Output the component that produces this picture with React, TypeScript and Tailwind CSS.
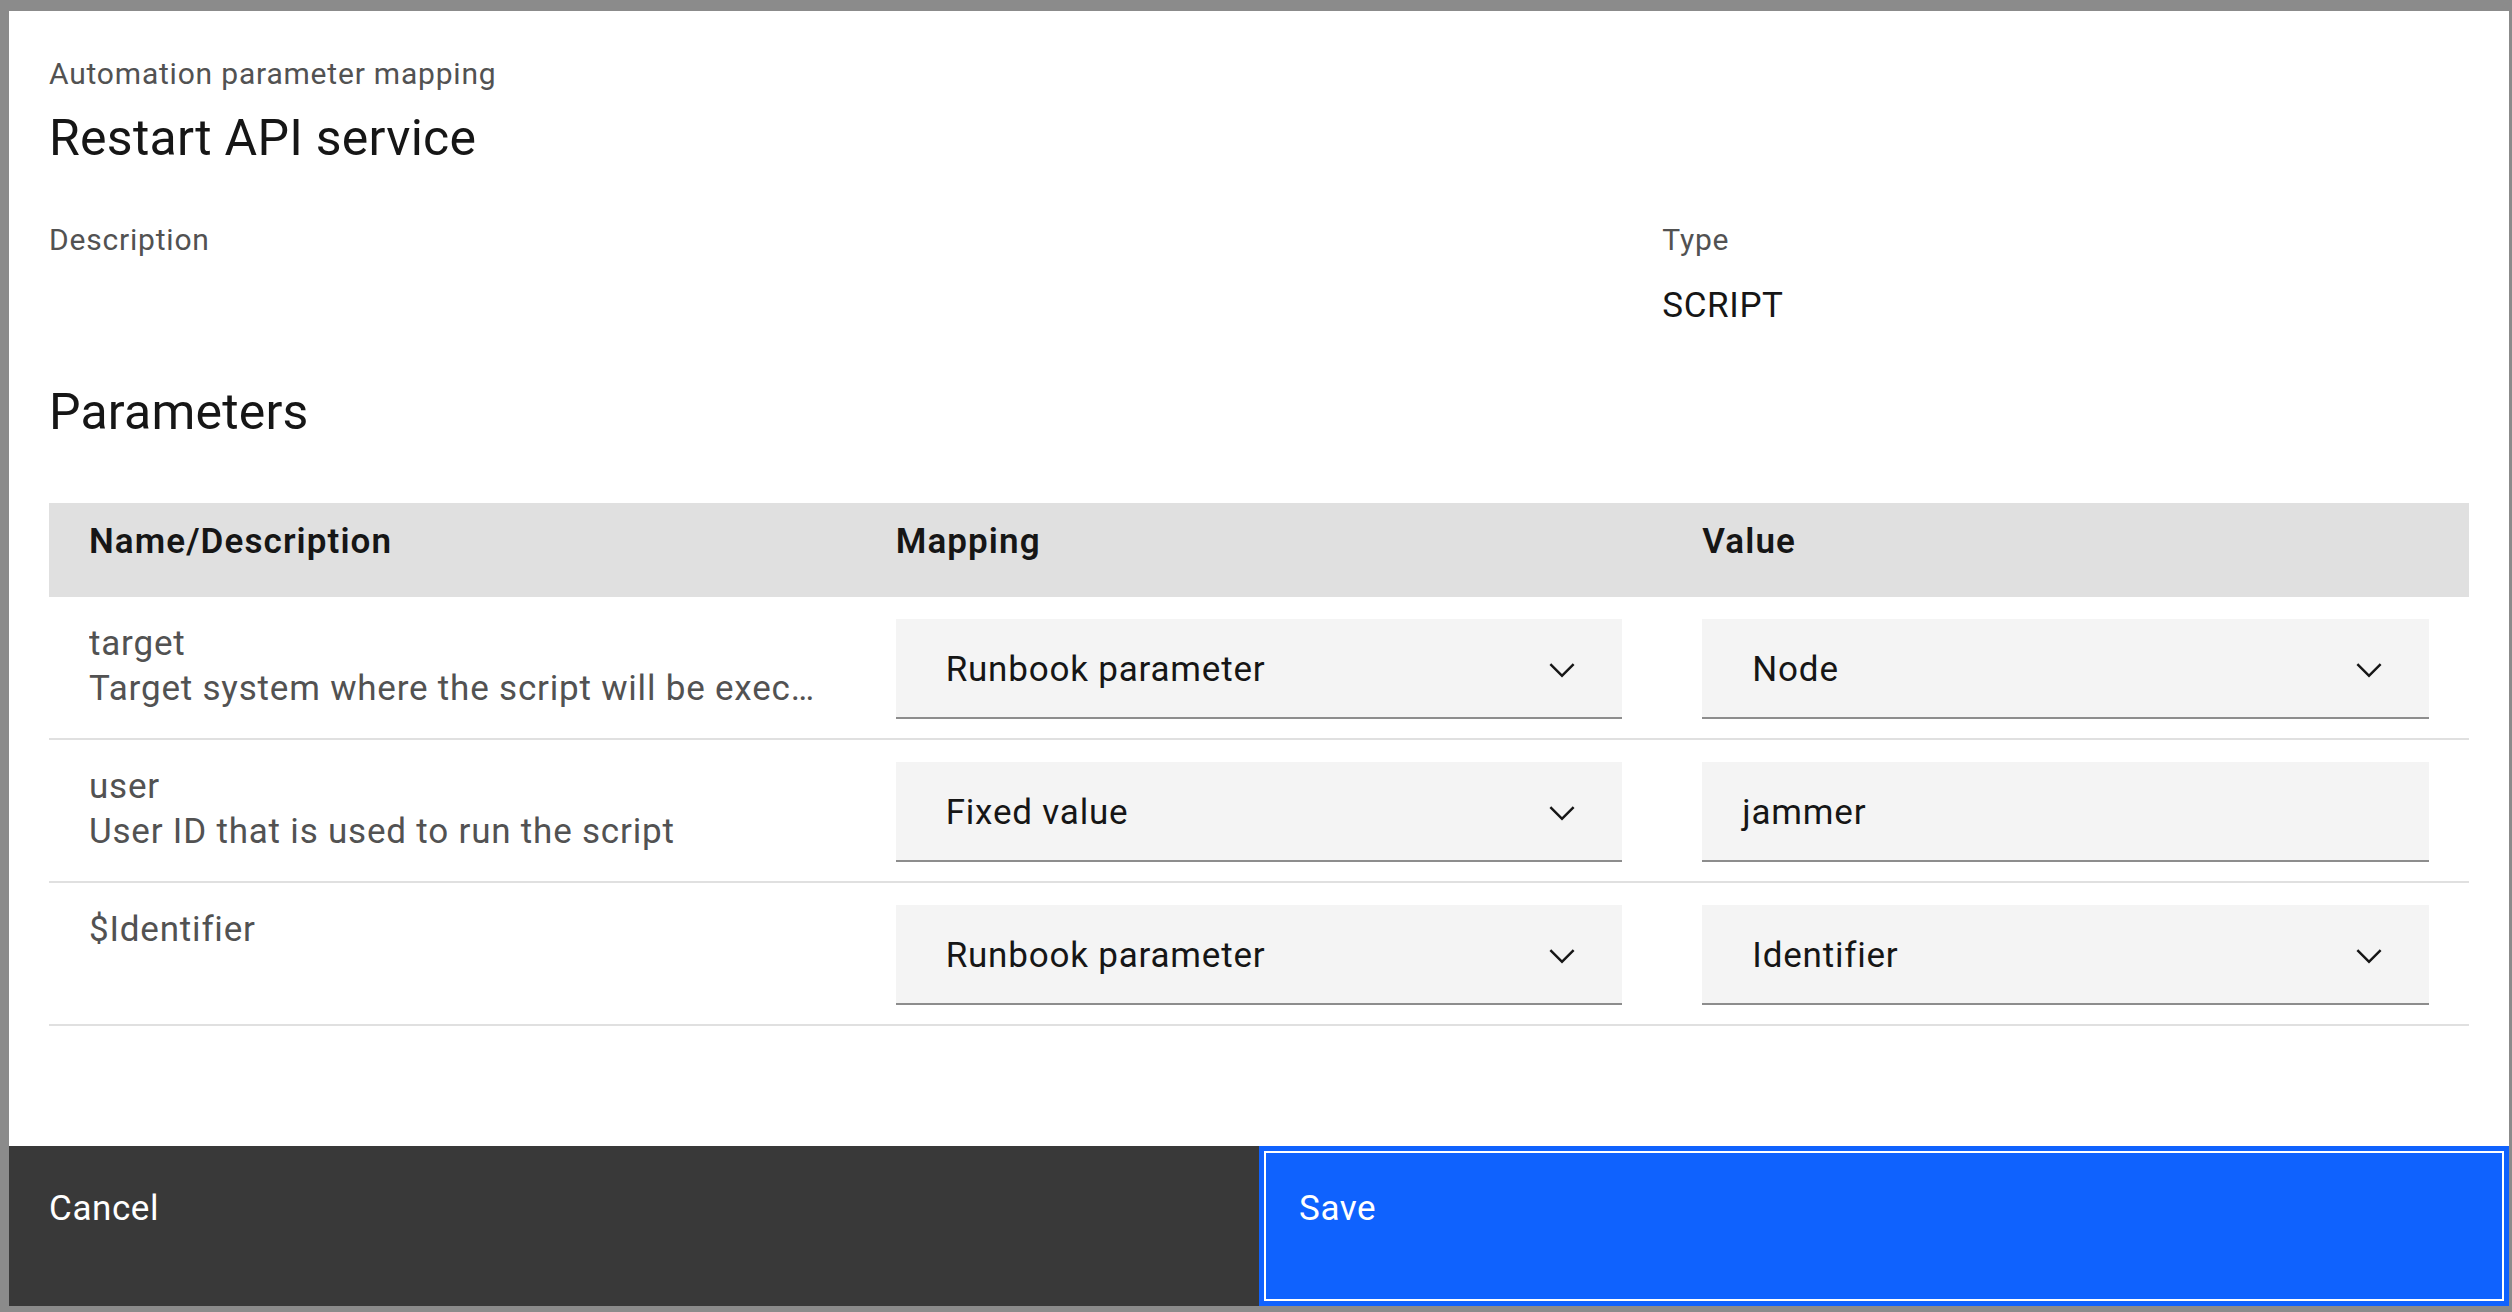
import React from "react";

const Chevron = () => (
  <svg width="40" height="40" viewBox="0 0 16 16" fill="#161616" aria-hidden="true">
    <path d="M8 11L3 6l.7-.7L8 9.6l4.3-4.3.7.7z" />
  </svg>
);

function Select({ value }: { value: string }) {
  return (
    <div className="h-[100px] bg-[#f4f4f4] border-b-2 border-[#8d8d8d] flex items-center justify-between pt-[3px] pl-[50px] pr-[40px] text-[35px] leading-[45px] text-[#161616] tracking-[0.8px]">
      <span>{value}</span>
      <Chevron />
    </div>
  );
}

function TextInput({ value }: { value: string }) {
  return (
    <div className="h-[100px] bg-[#f4f4f4] border-b-2 border-[#8d8d8d] flex items-center pt-[3px] pl-[40px] pr-[40px] text-[35px] leading-[45px] text-[#161616] tracking-[0.8px]">
      <span>{value}</span>
    </div>
  );
}

type Row = {
  name: string;
  desc?: string;
  mapping: string;
  value: string;
  valueIsInput?: boolean;
};

const rows: Row[] = [
  { name: "target", desc: "Target system where the script will be exec…", mapping: "Runbook parameter", value: "Node" },
  { name: "user", desc: "User ID that is used to run the script", mapping: "Fixed value", value: "jammer", valueIsInput: true },
  { name: "$Identifier", mapping: "Runbook parameter", value: "Identifier" },
];

export default function App() {
  return (
    <div className="w-[2512px] h-[1312px] bg-[#8b8b8b] pt-[11px] pl-[9px] font-['Roboto',sans-serif] overflow-hidden">
      <div className="w-[2500px] h-[1295px] bg-white flex flex-col">
        <div className="px-[40px] pt-[43px] flex-1">
          <div className="text-[30px] leading-[40px] text-[#525252] tracking-[0.8px]">Automation parameter mapping</div>
          <div className="mt-[9px] text-[50px] leading-[70px] text-[#161616] tracking-[0.25px]">Restart API service</div>

          <div className="mt-[47px] grid grid-cols-3">
            <div className="col-span-2 text-[30px] leading-[40px] text-[#525252] tracking-[0.8px]">Description</div>
            <div>
              <div className="text-[30px] leading-[40px] text-[#525252] tracking-[0.8px]">Type</div>
              <div className="mt-[23px] text-[35px] leading-[45px] text-[#161616] tracking-[0.6px]">SCRIPT</div>
            </div>
          </div>

          <div className="mt-[49px] text-[50px] leading-[70px] text-[#161616] tracking-[0.2px]">Parameters</div>

          <div className="mt-[56px]">
            <div className="grid grid-cols-3 h-[94px] bg-[#e0e0e0]">
              {["Name/Description", "Mapping", "Value"].map((h) => (
                <div key={h} className="px-[40px] pt-[16px] text-[35px] leading-[45px] font-semibold text-[#161616] tracking-[1.1px]">
                  {h}
                </div>
              ))}
            </div>
            {rows.map((r) => (
              <div key={r.name} className="grid grid-cols-3 border-b-2 border-[#e0e0e0] pt-[22px] pb-[19px]">
                <div className="px-[40px] pt-[2px] text-[35px] leading-[45px] text-[#525252] tracking-[0.8px] min-w-0">
                  <div className="whitespace-nowrap overflow-hidden">{r.name}</div>
                  {r.desc && <div className="whitespace-nowrap overflow-hidden">{r.desc}</div>}
                </div>
                <div className="px-[40px]">
                  <Select value={r.mapping} />
                </div>
                <div className="px-[40px]">
                  {r.valueIsInput ? <TextInput value={r.value} /> : <Select value={r.value} />}
                </div>
              </div>
            ))}
          </div>
        </div>

        <div className="grid grid-cols-2 h-[160px]">
          <button className="bg-[#393939] text-white text-left pl-[40px] pt-[40px] text-[35px] leading-[45px] tracking-[0.6px] flex items-start">
            Cancel
          </button>
          <button className="relative bg-[#0f62fe] text-white text-left pl-[40px] pt-[40px] text-[35px] leading-[45px] tracking-[0.6px] flex items-start">
            <span className="absolute inset-[5px] border-2 border-white pointer-events-none" />
            Save
          </button>
        </div>
      </div>
    </div>
  );
}
